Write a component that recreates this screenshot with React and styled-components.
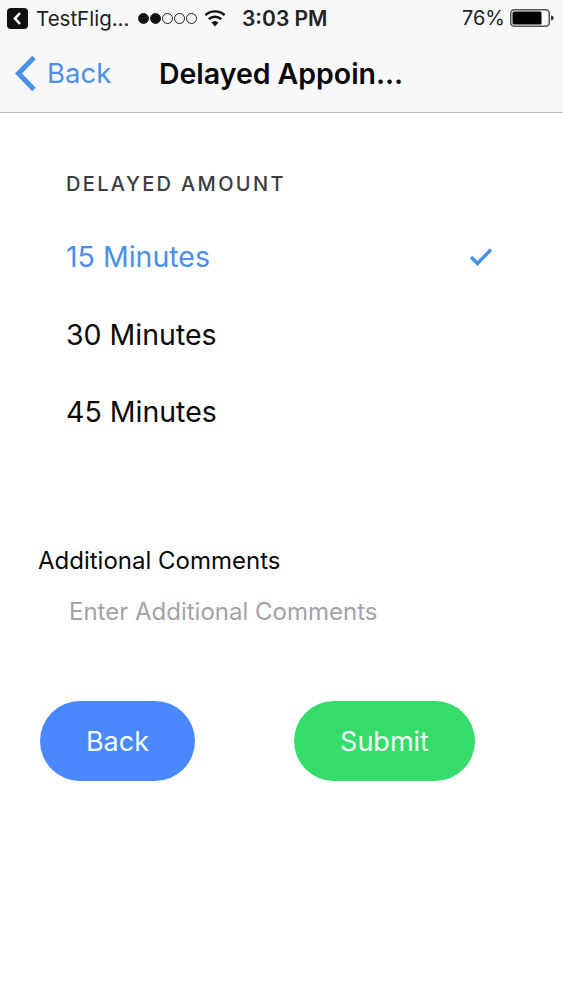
import styled, { createGlobalStyle } from 'styled-components'

const GlobalStyle = createGlobalStyle`
    html, body {
        margin: 0;
        padding: 0;
        background: #fff;
    }

    * {
        box-sizing: border-box;
    }
`

const Page = styled.div`
    width: 563px;
    height: 1000px;
    overflow: hidden;
    background: #fff;
    color: #0a0a0a;
    font-family: Inter, "Liberation Sans", sans-serif;
`

const Header = styled.header`
    height: 113px;
    background: #f8f8fa;
    border-bottom: 1px solid #bdbdc0;
`

const StatusBar = styled.div`
    display: grid;
    grid-template-columns: 234px auto 1fr;
    align-items: center;
    height: 36px;
    padding: 0 9px 0 7px;
    font-size: 20px;
    color: #222;
`

const StatusLeft = styled.div`
    display: flex;
    align-items: center;
`

const StatusRight = styled.div`
    display: flex;
    align-items: center;
    justify-content: flex-end;
    gap: 5px;
`

const AppName = styled.span`
    margin-left: 8px;
    font-size: 20.5px;
`

const Signal = styled.div`
    display: flex;
    gap: 1px;
    margin-left: 9px;
`

const Dot = styled.span`
    width: 11px;
    height: 11px;
    border-radius: 50%;
    border: 1px solid #222;
    background: ${props => props.$on ? '#111' : 'transparent'};
`

const Wifi = styled.svg`
    margin-left: 6px;
`

const Clock = styled.span`
    font-weight: 600;
    font-size: 21px;
    margin-left: 1px;
`

const NavBar = styled.nav`
    display: flex;
    align-items: center;
    height: 74px;
    padding-left: 14px;
`

const BackLink = styled.a`
    display: flex;
    align-items: center;
    gap: 10px;
    color: #4a90e8;
    font-size: 27.5px;
    width: 145px;
`

const Title = styled.h1`
    margin: 0;
    font-size: 28.5px;
    font-weight: 600;
    letter-spacing: -0.03px;
`

const Options = styled.section`
    padding: 58px 70px 0 66px;
`

const SectionLabel = styled.h2`
    margin: 0 0 21px;
    font-size: 20px;
    line-height: 26px;
    font-weight: 500;
    letter-spacing: 2.35px;
    color: #3c3c3e;
`

const Option = styled.div`
    display: flex;
    align-items: center;
    justify-content: space-between;
    height: 77.5px;
    font-size: 28.5px;
    color: ${props => props.$selected ? '#4a90e8' : '#0a0a0a'};
`

const Comments = styled.section`
    margin-top: 95.5px;
    padding-left: 38px;
`

const CommentsLabel = styled.label`
    display: block;
    font-size: 24px;
    line-height: 30px;
`

const CommentsInput = styled.input`
    display: block;
    width: 460px;
    height: 36px;
    margin: 17px 0 0 31px;
    padding: 0;
    border: 0;
    outline: 0;
    background: transparent;
    font: inherit;
    font-size: 24px;

    &::placeholder {
        color: #a2a2a8;
        opacity: 1;
    }
`

const Actions = styled.div`
    display: flex;
    gap: 99px;
    margin-top: 72px;
    padding-left: 40px;
`

const PillButton = styled.button`
    width: ${props => props.$width}px;
    height: 80px;
    border: 0;
    border-radius: 40px;
    background: ${props => props.$color};
    color: #f2fff6;
    font: inherit;
    font-size: 27px;
`

export default function App() {
    return (
        <Page>
            <GlobalStyle />
            <Header>
                <StatusBar>
                    <StatusLeft>
                        <svg width="21" height="21" viewBox="0 0 21 21">
                            <rect width="21" height="21" rx="4" fill="#111" />
                            <path d="M13 5l-5 5.5 5 5.5" fill="none" stroke="#fff" strokeWidth="2.6" />
                        </svg>
                        <AppName>TestFlig...</AppName>
                        <Signal>
                            <Dot $on />
                            <Dot $on />
                            <Dot />
                            <Dot />
                            <Dot />
                        </Signal>
                        <Wifi width="24" height="18" viewBox="0 0 24 18">
                            <path d="M12 17.5l-3.4-4a5 5 0 016.8 0z" fill="#111" />
                            <path d="M5.8 10.2a9 9 0 0112.4 0M2.4 6.2a14 14 0 0119.2 0" fill="none" stroke="#111" strokeWidth="2.4" />
                        </Wifi>
                    </StatusLeft>
                    <Clock>3:03 PM</Clock>
                    <StatusRight>
                        <span>76%</span>
                        <svg width="44" height="18" viewBox="0 0 44 18">
                            <rect x="0.75" y="0.75" width="38.5" height="16.5" rx="3.5" fill="none" stroke="#555" strokeWidth="1.5" />
                            <rect x="2.5" y="2.5" width="29" height="13" rx="1.5" fill="#000" />
                            <path d="M41 6.5c2 0 2.6 1 2.6 2.5s-.6 2.5-2.6 2.5z" fill="#333" />
                        </svg>
                    </StatusRight>
                </StatusBar>
                <NavBar>
                    <BackLink>
                        <svg width="23" height="37" viewBox="0 0 23 37">
                            <path d="M20 2.5L4.5 18.5 20 34.5" fill="none" stroke="#4a90e8" strokeWidth="5" />
                        </svg>
                        Back
                    </BackLink>
                    <Title>Delayed Appoin...</Title>
                </NavBar>
            </Header>
            <Options>
                <SectionLabel>DELAYED AMOUNT</SectionLabel>
                <Option $selected>
                    15 Minutes
                    <svg width="24" height="19" viewBox="0 0 24 19">
                        <path d="M2 10l6.5 6.5L22 2.5" fill="none" stroke="#4a90e8" strokeWidth="3.4" />
                    </svg>
                </Option>
                <Option>30 Minutes</Option>
                <Option>45 Minutes</Option>
            </Options>
            <Comments>
                <CommentsLabel>Additional Comments</CommentsLabel>
                <CommentsInput placeholder="Enter Additional Comments" />
            </Comments>
            <Actions>
                <PillButton $width={155} $color="#4a88ff">Back</PillButton>
                <PillButton $width={181} $color="#35dc6a">Submit</PillButton>
            </Actions>
        </Page>
    )
}
